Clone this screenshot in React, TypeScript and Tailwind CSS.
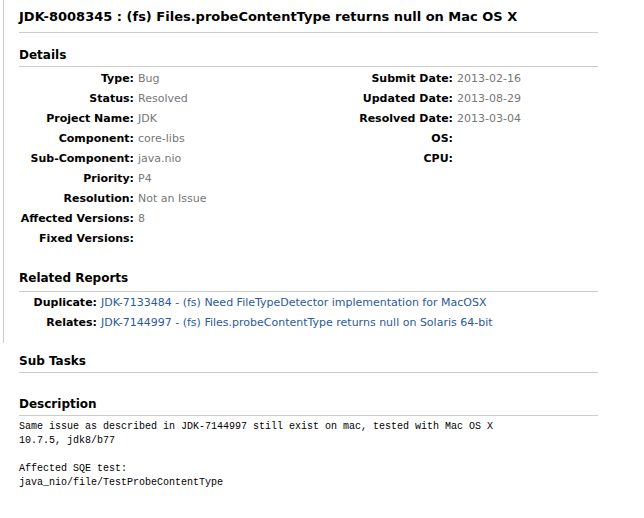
import React from "react";

const font = { fontFamily: '"DejaVu Sans", Verdana, sans-serif' };

function Row({ label, value, labelW }: { label: string; value?: string; labelW: string }) {
  return (
    <div className="flex h-[20px] items-center">
      <div className={`${labelW} shrink-0 text-right font-bold text-black`}>{label}</div>
      <div className="pl-[4px] text-[#777]">{value}</div>
    </div>
  );
}

export default function App() {
  const left: [string, string?][] = [
    ["Type:", "Bug"],
    ["Status:", "Resolved"],
    ["Project Name:", "JDK"],
    ["Component:", "core-libs"],
    ["Sub-Component:", "java.nio"],
    ["Priority:", "P4"],
    ["Resolution:", "Not an Issue"],
    ["Affected Versions:", "8"],
    ["Fixed Versions:", ""],
  ];
  const right: [string, string?][] = [
    ["Submit Date:", "2013-02-16"],
    ["Updated Date:", "2013-08-29"],
    ["Resolved Date:", "2013-03-04"],
    ["OS:", ""],
    ["CPU:", ""],
  ];
  return (
    <div className="w-[644px] h-[518px] bg-white text-[11px] text-black" style={font}>
      <div className="ml-[3px] border-l border-[#ccc] h-[343px] pl-[15px] w-[595px]">
        <div className="pt-[8px] h-[33px] border-b border-[#ccc] text-[13px] font-bold leading-[18px]">
          JDK-8008345 : (fs) Files.probeContentType returns null on Mac OS X
        </div>
        <div className="mt-[13px] h-[21px] border-b border-[#ccc] text-[12px] font-bold leading-[18px]">Details</div>
        <div className="flex pt-[2px]">
          <div className="w-[289px]">
            {left.map(([l, v]) => (
              <Row key={l} label={l} value={v} labelW="w-[115px]" />
            ))}
          </div>
          <div>
            {right.map(([l, v]) => (
              <Row key={l} label={l} value={v} labelW="w-[145px]" />
            ))}
          </div>
        </div>
        <div className="mt-[20px] h-[23px] border-b border-[#ccc] text-[12px] font-bold leading-[18px]">Related Reports</div>
        <div className="pt-[1px]">
          <div className="flex h-[20px] items-center">
            <div className="w-[78px] text-right font-bold">Duplicate:</div>
            <div className="pl-[4px] text-[#2a5a9a]">JDK-7133484 - (fs) Need FileTypeDetector implementation for MacOSX</div>
          </div>
          <div className="flex h-[20px] items-center">
            <div className="w-[78px] text-right font-bold">Relates:</div>
            <div className="pl-[4px] text-[#2a5a9a]">JDK-7144997 - (fs) Files.probeContentType returns null on Solaris 64-bit</div>
          </div>
        </div>
      </div>
      <div className="pl-[19px] w-[598px]">
        <div className="mt-[9px] h-[21px] border-b border-[#ccc] text-[12px] font-bold leading-[18px]">Sub Tasks</div>
        <div className="mt-[22px] h-[21px] border-b border-[#ccc] text-[12px] font-bold leading-[18px]">Description</div>
        <pre
          className="pt-[4px] text-[10px] leading-[14px] text-black"
          style={{ fontFamily: '"Liberation Mono", "Courier New", monospace' }}
        >
{`Same issue as described in JDK-7144997 still exist on mac, tested with Mac OS X
10.7.5, jdk8/b77

Affected SQE test:
java_nio/file/TestProbeContentType`}
        </pre>
      </div>
    </div>
  );
}
